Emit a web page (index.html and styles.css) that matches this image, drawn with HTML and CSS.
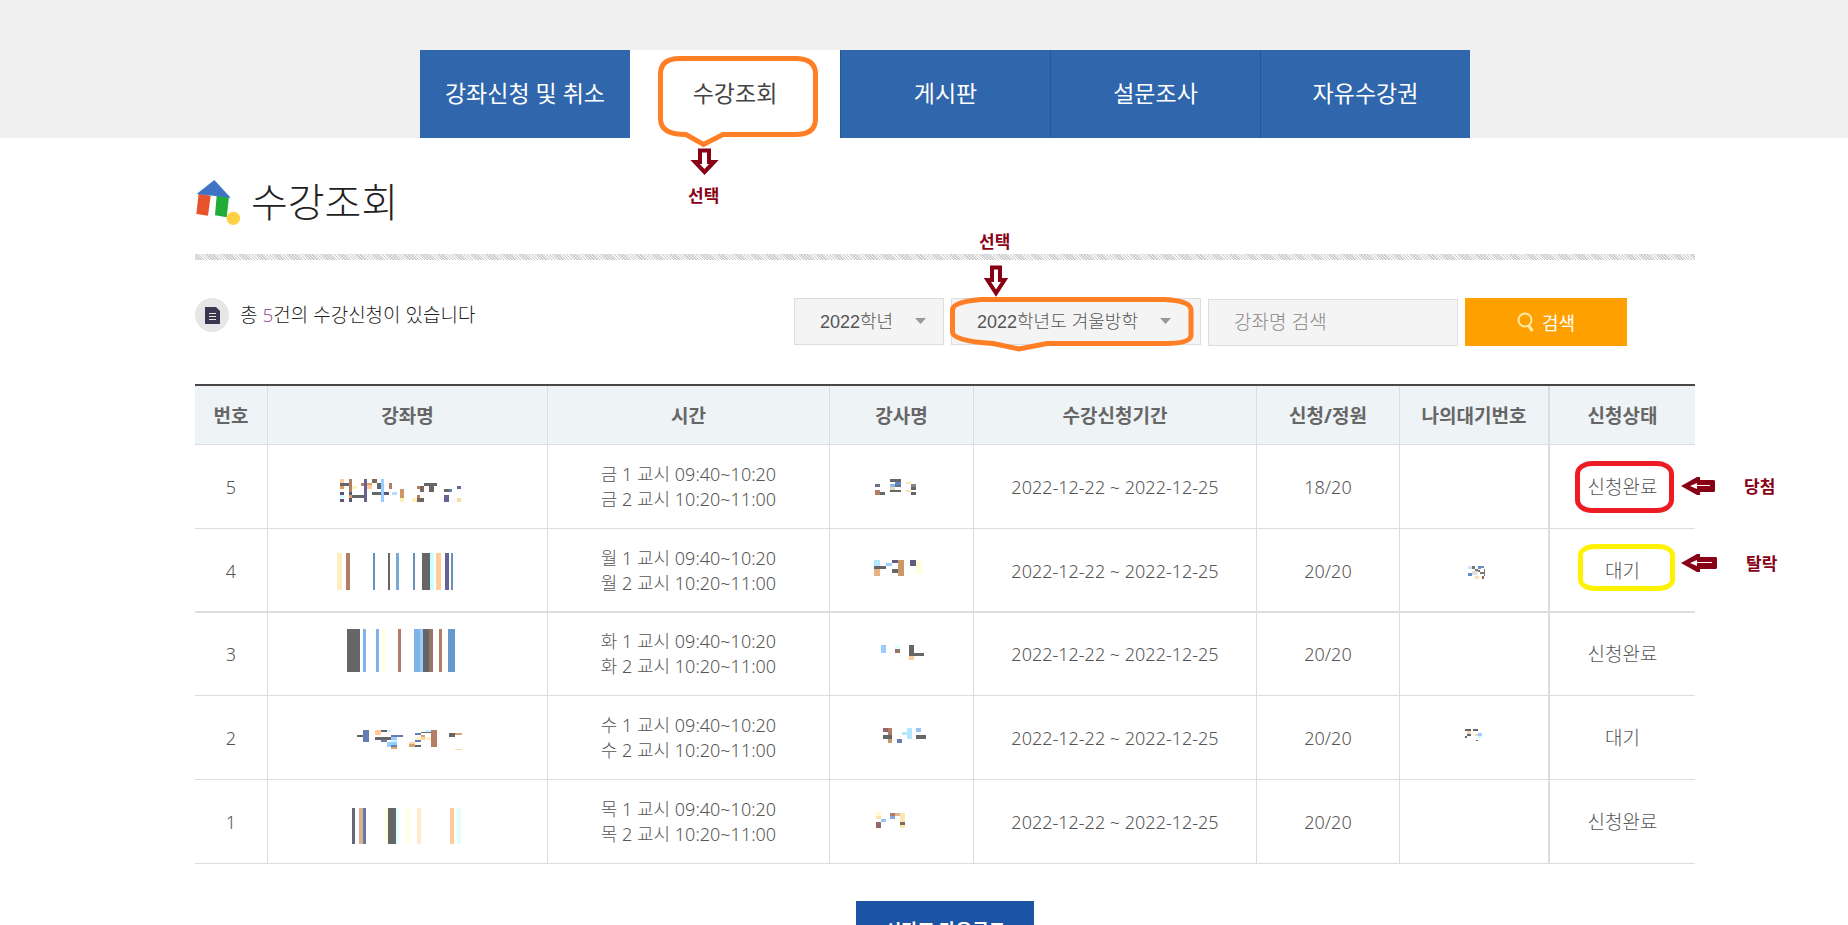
FILE: index.html
```html
<!DOCTYPE html>
<html lang="ko">
<head>
<meta charset="utf-8">
<title>수강조회</title>
<link rel="stylesheet" href="styles.css">
</head>
<body>
<header class="top">
  <nav class="tabs">
    <a class="tab" href="#">강좌신청 및 취소</a>
    <a class="tab tab-active" href="#" aria-current="page">수강조회
      <svg class="callout callout-tab" viewBox="0 0 210 130" width="210" height="130" aria-hidden="true">
        <path class="bubble" d="M50 8.500H165Q185.500 8.500 185.500 24V69Q185.500 84.500 165 84.500H93L73.500 94.500L56 84.500Q30.500 84.500 30.500 69V24Q30.500 8.500 50 8.500Z"/>
        <path class="pointer" d="M70 100.500H79V112H84L74.500 122L65 112H70Z"/>
      </svg>
      <span class="note note-tab">선택</span>
    </a>
    <a class="tab" href="#">게시판</a>
    <a class="tab" href="#">설문조사</a>
    <a class="tab" href="#">자유수강권</a>
  </nav>
</header>

<main class="content">
  <div class="title-row">
    <svg width="46" height="46" viewBox="45 60 138 138" aria-hidden="true">
      <path fill="#e8532b" d="M56 104L92 110L84 170L49 165Z"/>
      <path fill="#22ac38" d="M110 110L147 113L140 175L105 169Z"/>
      <path fill="#3f74c4" d="M103 63L152 116L50 105Z"/>
      <circle cx="160" cy="178" r="20" fill="#ffd040"/>
    </svg>
    <h1 class="title">수강조회</h1>
  </div>
  <div class="hatch"></div>

  <div class="toolbar">
    <p class="count">
      <svg width="34" height="34" viewBox="0 0 34 34" aria-hidden="true">
        <circle cx="17" cy="17" r="17" fill="#e6e6e6"/>
        <path fill="#3a3850" d="M10 9H21L25 13V26H10Z"/>
        <path stroke="#e6e6e6" d="M14 15.500H21M14 18.500H21M14 21.500H21"/>
      </svg>
      <span>총 <em class="num">5</em>건의 수강신청이 있습니다</span>
    </p>
    <form class="filters">
      <div class="pick pick-year">
        <select class="field" aria-label="학년도"><option>2022학년</option></select>
        <svg class="caret" width="11" height="6" viewBox="0 0 11 6" aria-hidden="true"><path fill="#999" d="M0 0H11L5.500 6Z"/></svg>
      </div>
      <div class="pick pick-term">
        <select class="field" aria-label="학기"><option>2022학년도 겨울방학</option></select>
        <svg class="caret caret-term" width="11" height="6" viewBox="0 0 11 6" aria-hidden="true"><path fill="#999" d="M0 0H11L5.500 6Z"/></svg>
        <svg class="callout callout-term" viewBox="-10 -40 260 100" width="260" height="100" aria-hidden="true">
          <path class="bubble" d="M30 1.500H214Q240 3 240 12V37Q240 45.500 214 45.500H96L68 51L42 45.500Q1.500 43 1.500 34V12Q1.500 4 30 1.500Z"/>
          <path class="pointer" d="M41 -30.500H49V-18H53.500L45 -5L36.500 -18H41Z"/>
        </svg>
        <span class="note note-term">선택</span>
      </div>
      <input class="field field-search" type="text" placeholder="강좌명 검색" aria-label="강좌명 검색">
      <button class="search" type="button">
        <svg width="17" height="20" viewBox="0 0 17 20" fill="none" stroke="#ffe9a8" stroke-width="2" aria-hidden="true"><circle cx="8" cy="8" r="6.500"/><path d="M11.500 13.500L15.500 19" stroke-width="3"/></svg>
        검색
      </button>
    </form>
  </div>

  <table class="list">
    <colgroup><col class="c-no"><col class="c-name"><col class="c-time"><col class="c-tutor"><col class="c-period"><col class="c-seat"><col class="c-wait"><col class="c-state"></colgroup>
    <thead>
      <tr><th>번호</th><th>강좌명</th><th>시간</th><th>강사명</th><th>수강신청기간</th><th>신청/정원</th><th>나의대기번호</th><th>신청상태</th></tr>
    </thead>
    <tbody>
      <tr>
        <td>5</td>
        <td><svg class="mosaic" width="144" height="50" viewBox="468 276 432 150" aria-label="가려진 강좌명">
          <path fill="#ffcc99" d="M480 327h12v12h-12zM561 345h15v12h-15z"/>
          <path fill="#666" d="M480 339h27v9h-27zM516 375h36v9h-36zM576 366h27v9h-27zM591 339h12v18h-12zM732 339h39v9h-39zM747 348h15v18h-15zM792 357h15v9h-15zM720 384h12v12h-12z"/>
          <path fill="#d9a066" d="M480 348h12v9h-12zM561 339h15v6h-15zM507 375h9v9h-9z"/>
          <path fill="#5b5578" d="M480 366h12v9h-12zM480 387h12v9h-12zM507 366h9v9h-9zM507 384h9v12h-9zM612 366h15v9h-15z"/>
          <path fill="#ccffff" d="M480 375h12v9h-12z"/>
          <path fill="#b37e66" d="M507 327h9v39h-9zM543 339h9v9h-9zM627 339h9v18h-9zM711 348h9v9h-9zM711 375h9v9h-9z"/>
          <path fill="#666394" d="M552 327h9v69h-9zM792 375h15v21h-15zM831 348h12v9h-12z"/>
          <path fill="#7d675f" d="M576 327h15v12h-15zM720 348h12v18h-12zM711 384h9v12h-9z"/>
          <path fill="#99ccff" d="M603 327h9v69h-9z"/><path fill="#b8dcf2" d="M636 366h15v9h-15z"/>
          <path fill="#cc9966" d="M660 357h12v27h-12z"/><path fill="#6680b8" d="M807 357h9v9h-9z"/>
          <path fill="#ffefb8" d="M516 348h15v9h-15zM660 384h12v12h-12zM696 384h15v12h-15z"/><path fill="#fadba8" d="M831 384h12v12h-12z"/>
        </svg></td>
        <td>금 1 교시 09:40~10:20<br>금 2 교시 10:20~11:00</td>
        <td><svg class="mosaic" width="96" height="50" viewBox="942 276 288 150" aria-label="가려진 강사명">
          <path fill="#666" d="M1050 327h33v9h-33zM1050 360h33v6h-33zM1020 366h15v9h-15zM1113 351h15v9h-15zM1113 366h15v9h-15z"/>
          <path fill="#667088" d="M1005 342h15v9h-15zM1065 345h18v6h-18z"/><path fill="#6684bd" d="M1065 336h18v9h-18z"/>
          <path fill="#b37e66" d="M1005 360h15v15h-15z"/><path fill="#8cb8e8" d="M1050 342h15v9h-15z"/>
          <path fill="#e6d6c4" d="M1050 351h15v9h-15z"/><path fill="#fae6b0" d="M1098 336h15v6h-15zM1098 360h15v6h-15z"/><path fill="#8c8290" d="M1113 342h15v9h-15z"/>
        </svg></td>
        <td>2022-12-22 ~ 2022-12-25</td><td>18/20</td><td></td>
        <td class="state">신청완료
          <span class="mark mark-won"></span>
          <svg class="arrow" width="34" height="18" viewBox="0 0 34 18" aria-hidden="true"><path fill="#880015" d="M0 9L16 0H19V3H33L34 4V14L33 15H19V18H16Z"/><path fill="#fff" d="M9 9L16 6V8H29V9H16V12Z"/></svg>
          <span class="note note-side">당첨</span>
        </td>
      </tr>
      <tr>
        <td>4</td>
        <td><svg class="mosaic" width="144" height="50" viewBox="468 528 432 150" aria-label="가려진 강좌명">
          <path fill="#ffefc0" d="M471 549h15v111h-15z"/><path fill="#b37e66" d="M498 549h12v111h-12z"/>
          <path fill="#6690bd" d="M579 549h6v111h-6zM699 549h6v111h-6zM813 549h6v111h-6z"/><path fill="#666" d="M624 549h6v111h-6zM726 549h24v111h-24z"/>
          <path fill="#7aaad9" d="M648 549h9v111h-9z"/><path fill="#ccffff" d="M750 549h12v111h-12z"/>
          <path fill="#ffcc99" d="M768 549h15v111h-15z"/><path fill="#666394" d="M795 549h12v111h-12z"/>
        </svg></td>
        <td>월 1 교시 09:40~10:20<br>월 2 교시 10:20~11:00</td>
        <td><svg class="mosaic" width="96" height="50" viewBox="942 528 288 150" aria-label="가려진 강사명">
          <path fill="#b3e6ff" d="M1002 570h18v18h-18z"/><path fill="#666" d="M1002 588h36v9h-36zM1056 597h18v12h-18z"/>
          <path fill="#e6b380" d="M1002 597h18v21h-18z"/><path fill="#99ccff" d="M1038 579h18v9h-18z"/>
          <path fill="#605c80" d="M1056 570h18v9h-18zM1110 570h18v18h-18z"/><path fill="#cc9966" d="M1074 570h18v48h-18z"/><path fill="#ffffe0" d="M1128 570h18v42h-18z"/>
        </svg></td>
        <td>2022-12-22 ~ 2022-12-25</td><td>20/20</td>
        <td><svg class="mosaic" width="48" height="50" viewBox="210 528 144 150" aria-label="가려진 대기번호">
          <path fill="#d4e4f4" d="M264 588h12v9h-12zM276 603h15v12h-15z"/><path fill="#777" d="M276 588h9v9h-9zM285 597h9v6h-9zM300 606h12v6h-12zM312 597h4v21h-4z"/>
          <path fill="#6690c4" d="M264 609h12v9h-12zM294 588h9v9h-9zM303 588h9v6h-9z"/><path fill="#ffdcb8" d="M285 603h9v6h-9zM285 618h12v9h-12z"/><path fill="#8a6860" d="M306 618h6v9h-6zM294 600h6v6h-6z"/>
        </svg></td>
        <td class="state">대기
          <span class="mark mark-lost"></span>
          <svg class="arrow arrow-lost" width="36" height="18" viewBox="0 0 36 18" aria-hidden="true"><path fill="#880015" d="M0 9L16 0H19V3H35L36 4V14L35 15H19V18H16Z"/><path fill="#fff" d="M9 9L16 6V8H31V9H16V12Z"/></svg>
          <span class="note note-side note-lost">탈락</span>
        </td>
      </tr>
      <tr>
        <td>3</td>
        <td><svg class="mosaic" width="144" height="50" viewBox="468 777 432 150" aria-label="가려진 강좌명">
          <path fill="#666" d="M501 777h39v129h-39zM729 777h18v129h-18z"/><path fill="#80b3e6" d="M549 777h9v129h-9zM588 777h9v129h-9zM702 777h18v129h-18z"/>
          <path fill="#ffffe6" d="M606 777h9v129h-9z"/><path fill="#b37e66" d="M654 777h9v129h-9zM777 777h9v129h-9z"/>
          <path fill="#99ccff" d="M720 777h9v129h-9z"/><path fill="#967468" d="M747 777h12v129h-12z"/><path fill="#6699cc" d="M804 777h21v129h-21z"/>
        </svg></td>
        <td>화 1 교시 09:40~10:20<br>화 2 교시 10:20~11:00</td>
        <td><svg class="mosaic" width="96" height="50" viewBox="42 27 288 150" aria-label="가려진 강사명">
          <path fill="#99ccff" d="M123 75h15v24h-15z"/><path fill="#e0ffff" d="M165 75h15v12h-15z"/><path fill="#967468" d="M165 87h15v12h-15z"/>
          <path fill="#666" d="M207 75h15v33h-15zM222 99h30v9h-30z"/><path fill="#ffcc99" d="M207 108h15v12h-15z"/>
        </svg></td>
        <td>2022-12-22 ~ 2022-12-25</td><td>20/20</td><td></td><td class="state">신청완료</td>
      </tr>
      <tr>
        <td>2</td>
        <td><svg class="mosaic" width="144" height="50" viewBox="468 159 432 150" aria-label="가려진 강좌명">
          <path fill="#666" d="M531 225h18v6h-18zM585 231h48v9h-48zM603 210h18v6h-18zM723 216h30v3h-30zM705 255h18v6h-18zM807 219h18v12h-18z"/>
          <path fill="#667db0" d="M549 210h18v36h-18zM633 225h36v6h-36zM603 240h18v6h-18zM633 255h18v6h-18zM705 219h18v6h-18zM705 240h18v6h-18z"/>
          <path fill="#ffcc99" d="M585 210h18v15h-18z"/><path fill="#99ccff" d="M633 231h18v9h-18zM621 246h12v15h-12zM633 246h18v9h-18z"/>
          <path fill="#c8f4ff" d="M621 210h12v6h-12zM633 240h18v6h-18zM735 210h18v6h-18z"/><path fill="#d9a670" d="M633 261h18v6h-18zM687 252h18v9h-18zM723 225h12v6h-12zM825 219h21v6h-21z"/>
          <path fill="#fad6a0" d="M687 246h18v6h-18zM723 231h12v9h-12zM825 267h21v3h-21z"/><path fill="#ffefd0" d="M705 231h18v9h-18zM735 231h18v9h-18z"/>
          <path fill="#b37e66" d="M753 210h18v51h-18z"/>
        </svg></td>
        <td>수 1 교시 09:40~10:20<br>수 2 교시 10:20~11:00</td>
        <td><svg class="mosaic" width="96" height="50" viewBox="42 279 288 150" aria-label="가려진 강사명">
          <path fill="#96686a" d="M129 324h15v12h-15z"/><path fill="#b37e66" d="M144 324h12v21h-12z"/><path fill="#666" d="M129 345h27v12h-27zM228 345h30v12h-30z"/>
          <path fill="#cc9966" d="M144 357h12v12h-12z"/><path fill="#667db0" d="M171 357h15v12h-15z"/><path fill="#b3e6ff" d="M186 336h15v9h-15zM201 324h15v33h-15z"/><path fill="#99c4f0" d="M228 324h15v12h-15z"/>
        </svg></td>
        <td>2022-12-22 ~ 2022-12-25</td><td>20/20</td>
        <td><svg class="mosaic" width="48" height="50" viewBox="210 279 144 150" aria-label="가려진 대기번호">
          <path fill="#666" d="M255 327h18v6h-18zM279 327h15v6h-15zM261 342h12v6h-12zM255 348h6v6h-6zM288 360h6v3h-6z"/><path fill="#fad6b0" d="M261 333h12v9h-12zM285 342h9v6h-9z"/>
          <path fill="#99ccff" d="M294 339h12v9h-12z"/><path fill="#ccffff" d="M291 348h15v6h-15z"/>
        </svg></td>
        <td class="state">대기</td>
      </tr>
      <tr>
        <td>1</td>
        <td><svg class="mosaic" width="144" height="50" viewBox="468 411 432 150" aria-label="가려진 강좌명">
          <path fill="#666878" d="M516 444h9v108h-9z"/><path fill="#deb08c" d="M537 444h12v108h-12z"/><path fill="#6679a8" d="M549 444h9v108h-9z"/>
          <path fill="#ffffe6" d="M615 444h9v108h-9zM678 444h12v108h-12z"/><path fill="#666" d="M624 444h24v108h-24z"/><path fill="#e0ffff" d="M648 444h9v108h-9zM831 444h12v108h-12z"/>
          <path fill="#fcebcc" d="M711 444h12v108h-12z"/><path fill="#ffcc99" d="M810 444h12v108h-12z"/>
        </svg></td>
        <td>목 1 교시 09:40~10:20<br>목 2 교시 10:20~11:00</td>
        <td><svg class="mosaic" width="96" height="50" viewBox="42 531 288 150" aria-label="가려진 강사명">
          <path fill="#fff8d0" d="M108 576h15v12h-15z"/><path fill="#fae6b0" d="M108 588h15v9h-15zM180 579h15v27h-15zM180 615h15v9h-15z"/><path fill="#99c4f0" d="M123 597h15v9h-15z"/>
          <path fill="#96686a" d="M108 606h15v18h-15z"/><path fill="#b37e66" d="M150 579h15v9h-15z"/><path fill="#deb48c" d="M165 579h15v9h-15z"/><path fill="#80a8d8" d="M150 588h15v9h-15z"/><path fill="#806a60" d="M180 606h15v9h-15z"/>
        </svg></td>
        <td>2022-12-22 ~ 2022-12-25</td><td>20/20</td><td></td><td class="state">신청완료</td>
      </tr>
    </tbody>
  </table>
  <button class="download" type="button">시간표 다운로드</button>
</main>
</body>
</html>
```
FILE: styles.css
```css
* { box-sizing: border-box; }

body {
  margin: 0;
  background: #fff;
  color: #555;
  font-family: "Noto Sans", "Noto Sans CJK KR", sans-serif;
  font-size: 18px;
  font-weight: 300;
}

button, input, select { font: inherit; }

/* top navigation */
.top {
  padding: 50px 0 0 42px;
  background: #f0f0f0;
}
.tabs {
  display: grid;
  grid-template-columns: repeat(5, 1fr);
  max-width: 1050px;
  margin: 0 auto;
}
.tab {
  position: relative;
  height: 88px;
  background: #3066ab;
  color: #fff;
  font-size: 23px;
  font-weight: 400;
  line-height: 86px;
  text-align: center;
  text-decoration: none;
}
.tab + .tab { border-left: 1px solid #2058a2; }
.tab.tab-active {
  border-left: 0;
  background: #fff;
  color: #444;
}

/* hand-drawn guides */
.callout {
  position: absolute;
  z-index: 1;
  pointer-events: none;
}
.callout-tab { top: 0; left: 0; }
.callout-term { top: -40px; left: -10px; }
.bubble { fill: none; stroke: #ff7f27; stroke-width: 5; }
.pointer { fill: #fff; stroke: #880015; stroke-width: 4; }
.note {
  position: absolute;
  color: #880015;
  font-size: 17px;
  font-weight: 700;
  line-height: 24px;
  white-space: nowrap;
}
.note-tab { top: 134px; left: 58px; }
.note-term { top: -68px; left: 28px; }
.note-side { top: 30px; left: 194px; }
.note-lost { top: 23px; left: 196px; }
.mark {
  position: absolute;
  border: 5px solid;
}
.mark-won {
  top: 16px;
  left: 25px;
  width: 99px;
  height: 52px;
  border-color: #ed1c24;
  border-radius: 17px / 13px;
}
.mark-lost {
  top: 15px;
  left: 28px;
  width: 97px;
  height: 47px;
  border-color: #fff200;
  border-radius: 17px / 11px;
}
.arrow {
  position: absolute;
  top: 32px;
  left: 131px;
}
.arrow-lost { top: 25px; }

/* page heading */
.content { padding-left: 42px; }
.content > * {
  max-width: 1500px;
  margin-right: auto;
  margin-left: auto;
}
.title-row {
  display: flex;
  align-items: center;
  gap: 10px;
  padding: 36px 0 24px;
}
.title {
  margin: 0;
  color: #222;
  font-size: 40px;
  font-weight: 300;
  line-height: 56px;
}
.hatch {
  height: 6px;
  background: repeating-linear-gradient(45deg, #ccc 0 1px, #f6f6f6 1px 2px);
}

/* count and filters */
.toolbar {
  display: flex;
  justify-content: space-between;
  padding: 38px 68px 38px 0;
}
.count {
  display: flex;
  gap: 11px;
  height: 34px;
  margin: 0;
  color: #222;
  font-size: 19px;
  line-height: 34px;
}
.num { color: #9a5a9a; font-style: normal; }
.filters { display: flex; gap: 7px; }
.pick { position: relative; }
.pick-year { width: 150px; }
.pick-term { width: 250px; }
.field {
  appearance: none;
  width: 100%;
  height: 47px;
  padding: 0 25px;
  border: 1px solid #ddd;
  border-radius: 0;
  background: #f4f4f4;
  color: #555;
  font-family: "Liberation Sans", "Noto Sans CJK KR", sans-serif;
}
.field-search { width: 250px; margin-top: 1px; font-size: 19px; }
.field::placeholder { color: #888; opacity: 1; }
.caret {
  position: absolute;
  top: 20px;
  right: 18px;
}
.caret-term { right: 30px; }
.search {
  display: flex;
  align-items: center;
  justify-content: center;
  gap: 8px;
  width: 162px;
  height: 48px;
  padding: 0;
  border: 0;
  background: #fea100;
  color: #fff;
  font-weight: 400;
}

/* course list */
.list {
  width: 100%;
  border-top: 2px solid #4a4646;
  border-spacing: 0;
  table-layout: fixed;
}
.c-no { width: 73px; }
.c-name { width: 280px; }
.c-time { width: 282px; }
.c-tutor { width: 144px; }
.c-period { width: 283px; }
.c-seat { width: 143px; }
.c-wait { width: 150px; }
.c-state { width: 145px; }
.list th, .list td {
  border-right: 1px solid #dcdde0;
  border-bottom: 1px solid #dcdde0;
  text-align: center;
}
.list th {
  height: 59px;
  padding: 0;
  background: #eef3f6;
  color: #666;
  font-size: 19px;
  font-weight: 700;
}
.list td {
  position: relative;
  padding: 17px 0 16px;
  line-height: 25px;
}
.list tr > :nth-child(7) { border-right-width: 2px; }
.list tr > :last-child { border-right: 0; }
.list tbody tr:nth-child(2) td { padding-bottom: 15px; border-bottom-width: 2px; }
.list tbody tr:nth-child(3) td { padding-top: 16px; }
.list .state { font-size: 19px; }
.mosaic {
  display: block;
  margin: 0 auto;
  overflow: visible;
  shape-rendering: crispEdges;
}
.download {
  display: block;
  width: 178px;
  height: 56px;
  margin-top: 37px;
  border: 0;
  background: #1b54a4;
  color: #fff;
  font-weight: 700;
}
```
